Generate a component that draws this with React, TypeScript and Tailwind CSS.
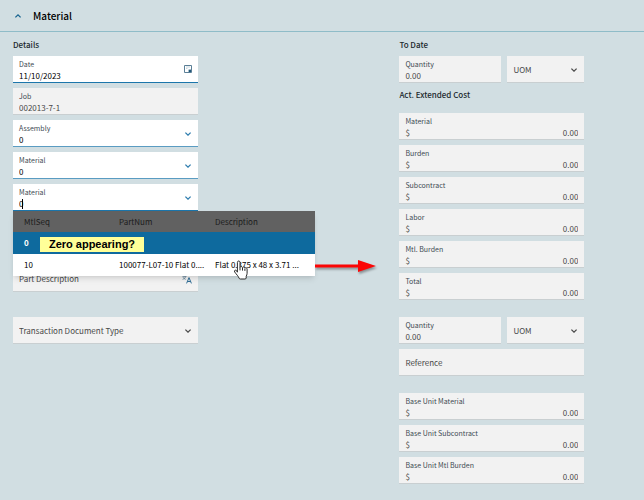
import React, { useState } from "react";
import clsx from "clsx";

interface FieldProps {
  id: string;
  label: string;
  value: string;
  active?: boolean;
  readOnly?: boolean;
  className?: string;
  children?: React.ReactNode;
}

interface SelectProps {
  id: string;
  label: string;
  value: string;
}

interface MaterialRow {
  seq: string;
  part: string;
  description: string;
}

const rows: MaterialRow[] = [
  { seq: "0", part: "", description: "" },
  {
    seq: "10",
    part: "100077-L07-10 Flat 0....",
    description: "Flat 0.375 x 48 x 3.71 ...",
  },
];

const actualCosts = [
  "Material",
  "Burden",
  "Subcontract",
  "Labor",
  "Mtl. Burden",
  "Total",
];

const baseUnits = [
  "Base Unit Material",
  "Base Unit Subcontract",
  "Base Unit Mtl Burden",
];

const Chevron = ({ className }: { className?: string }) => (
  <svg
    viewBox="0 0 8 6"
    fill="none"
    stroke="currentColor"
    strokeWidth="1.3"
    className={clsx("h-[6px] w-[8px]", className)}
  >
    <path d="M1.4 1.6 4 4.1 6.6 1.6" />
  </svg>
);

const CalendarIcon = () => (
  <svg viewBox="0 0 8 8" fill="none" className="h-[8px] w-[8px]">
    <path d="M.5.5h7v7h-7z" stroke="#5b7f96" />
    <path d="M2 2h4M2 3.500h1.500" stroke="#b9cbd6" strokeWidth=".8" />
    <path d="M4.600 4.600h2.400v2.400H4.600z" fill="#22587a" />
  </svg>
);

const TranslateIcon = () => (
  <svg viewBox="0 0 10 9" fill="none" className="h-[9px] w-[10px]">
    <path
      d="M.4 1.300h4M2.400.3v1M.6 4.400C2.400 3.600 3.500 2.600 3.900 1.300M1 2.200c.5 1 1.500 1.800 2.700 2.200"
      stroke="#5d7f95"
      strokeWidth=".8"
    />
    <path d="M4.600 8.400 7 2.600l2.400 5.800M5.400 6.500h3.200" stroke="#2f6d95" />
  </svg>
);

const HandCursor = () => (
  <svg viewBox="0 0 16 20" className="h-[20px] w-[16px]">
    <path
      d="M4.400 12.200V2.400c0-1.900 2.600-1.900 2.600 0v5c.3-1.200 2.300-1.100 2.500.2.5-1 2.300-.8 2.400.5.6-.8 2.200-.5 2.200 1v4.200c0 1.300-.5 2-.9 3V18c-.2.8-.6 1-1.300 1H7.300c-.7 0-1-.3-1.300-1-.7-1.900-2.500-3.400-4.300-6-.9-1.500.8-2.600 1.900-1.300z"
      fill="#fff"
      stroke="#2a2a2a"
      strokeLinejoin="round"
    />
    <path d="M7 7.400v3M9.500 8v2.600M11.900 8.600v2.300" stroke="#2a2a2a" />
  </svg>
);

const fieldLabel = "block text-[7px] leading-[12px] text-[#3d4a53]";

const heading = "text-[8px] leading-[13px] font-medium";

const Field = ({
  id,
  label,
  value,
  active,
  readOnly,
  className,
  children,
}: FieldProps) => (
  <div
    className={clsx(
      "relative h-[27px] border-b px-[6px] pt-[2px]",
      active ? "border-[#1c76ab] bg-white" : "border-[#c9cfd1] bg-[#f2f2f2]",
      className
    )}
  >
    <label htmlFor={id} className={fieldLabel}>
      {label}
    </label>

    <input
      id={id}
      defaultValue={value}
      readOnly={readOnly}
      className={clsx(
        "block h-[12px] w-full bg-transparent text-[8px] leading-[12px] outline-none",
        active ? "text-black" : "text-[#484848]"
      )}
    />

    {children}
  </div>
);

const MoneyField = ({ id, label }: { id: string; label: string }) => (
  <div className="h-[27px] border-b border-[#c9cfd1] bg-[#f2f2f2] px-[6px] pt-[2px]">
    <label htmlFor={id} className={fieldLabel}>
      {label}
    </label>

    <div className="flex text-[8px] leading-[12px] text-[#484848]">
      <span>$</span>
      <input
        id={id}
        defaultValue="0.00"
        readOnly
        className="h-[12px] min-w-0 flex-1 bg-transparent text-right outline-none"
      />
    </div>
  </div>
);

const SelectField = ({ id, label, value }: SelectProps) => (
  <div className="relative h-[27px] border-b border-[#5a9cc2] bg-white px-[6px] pt-[2px]">
    <label htmlFor={id} className={fieldLabel}>
      {label}
    </label>

    <select
      id={id}
      className="block h-[12px] w-full appearance-none bg-transparent text-[8px] leading-[12px] text-black outline-none"
    >
      <option>{value}</option>
    </select>

    <Chevron className="pointer-events-none absolute top-[11px] right-[6px] text-[#2b7bad]" />
  </div>
);

// Empty drop-down, its name stands in as the placeholder
const EmptySelect = ({ label, className }: { label: string; className?: string }) => (
  <div
    className={clsx(
      "relative h-[27px] border-b border-[#c9cfd1] bg-[#f2f2f2]",
      className
    )}
  >
    <select
      aria-label={label}
      className="block h-full w-full appearance-none bg-transparent px-[6px] pt-[2px] text-[8px] text-[#484848] outline-none"
    >
      <option>{label}</option>
    </select>

    <Chevron className="pointer-events-none absolute top-[11px] right-[6px] text-[#484848]" />
  </div>
);

const EmptyField = ({
  label,
  children,
}: {
  label: string;
  children?: React.ReactNode;
}) => (
  <div className="flex h-[27px] items-center border-b border-[#c9cfd1] bg-[#f2f2f2] px-[6px] pt-[2px]">
    <input
      aria-label={label}
      placeholder={label}
      className="min-w-0 flex-1 bg-transparent text-[8px] outline-none placeholder:text-[#484848]"
    />
    {children}
  </div>
);

const QuantityRow = ({ id }: { id: string }) => (
  <div className="flex gap-[6px]">
    <Field id={id} label="Quantity" value="0.00" readOnly className="w-[102px]" />
    <EmptySelect label="UOM" className="flex-1" />
  </div>
);

const MaterialList = () => {
  const [selected, setSelected] = useState(0);

  return (
    <div className="absolute top-full left-0 z-10 w-[302px] bg-white shadow-md">
      <table className="w-full table-fixed text-left text-[8px] leading-[12px]">
        <thead className="bg-[#616161] text-[#1c1c1c]">
          <tr className="h-[21px]">
            <th className="w-[95px] pl-[11px] font-normal">MtlSeq</th>
            <th className="w-[96px] pl-[11px] font-normal">PartNum</th>
            <th className="pl-[11px] font-normal">Description</th>
          </tr>
        </thead>

        <tbody>
          {rows.map((row, i) => (
            <tr
              key={row.seq}
              onClick={() => setSelected(i)}
              className={clsx(
                "h-[22px] whitespace-nowrap",
                selected === i ? "bg-[#0e6a9e] font-bold text-white" : "text-black"
              )}
            >
              <td className="pl-[11px]">{row.seq}</td>
              <td className="pl-[11px]">{row.part}</td>
              <td className="pl-[11px]">{row.description}</td>
            </tr>
          ))}
        </tbody>
      </table>

      <p className="absolute top-[26px] left-[27px] flex h-[15px] w-[104px] items-center justify-center bg-[#ffff99] font-['Liberation_Sans',sans-serif] text-[11px] font-bold whitespace-nowrap text-black">
        Zero appearing?
      </p>

      <div className="absolute top-[49px] left-[220px]">
        <HandCursor />
      </div>

      <svg
        viewBox="0 0 62 16"
        className="absolute top-[47px] left-full h-[16px] w-[62px] drop-shadow-[1px_2px_1px_rgba(0,0,0,0.35)]"
      >
        <path d="M0 6.500h43V2l18 6-18 6V9.500H0z" fill="#fb0505" />
      </svg>
    </div>
  );
};

const App = () => {
  const [open, setOpen] = useState(true);

  return (
    <main className="min-h-screen bg-[#d1dee2] font-['Noto_Sans_CJK_SC',sans-serif] text-[#20282d]">
      <header className="flex h-[32px] items-center border-b border-[#8fbcc8] px-[14px]">
        <button
          aria-label="Toggle Material"
          aria-expanded={open}
          onClick={() => setOpen(!open)}
        >
          <Chevron className="rotate-180 text-[#16638f]" />
        </button>
        <h1 className="ml-[11px] text-[10px] leading-[16px] font-medium text-black">
          Material
        </h1>
      </header>

      {open && (
        <div className="grid grid-cols-[3fr_2fr] pt-[6px] pb-[16px]">
          <section className="pl-[13px]">
            <div className="flex w-[185px] flex-col gap-[5px]">
              <h2 className={heading}>Details</h2>

              <Field id="date" label="Date" value="11/10/2023" active>
                <button
                  aria-label="Pick date"
                  className="absolute top-[9px] right-[6px]"
                >
                  <CalendarIcon />
                </button>
              </Field>

              <Field id="job" label="Job" value="002013-7-1" readOnly />
              <SelectField id="assembly" label="Assembly" value="0" />
              <SelectField id="material" label="Material" value="0" />

              <div className="relative">
                <Field id="mtlSeq" label="Material" value="0" active>
                  <Chevron className="pointer-events-none absolute top-[11px] right-[6px] text-[#2b7bad]" />
                  <span className="absolute bottom-[1px] left-[9px] h-[10px] w-px bg-black" />
                </Field>
                <MaterialList />
              </div>
            </div>

            <div className="mt-[54px] flex w-[185px] flex-col gap-[25px]">
              <EmptyField label="Part Description">
                <TranslateIcon />
              </EmptyField>
              <EmptySelect label="Transaction Document Type" />
            </div>
          </section>

          <section className="pl-[13px]">
            <div className="flex w-[185px] flex-col gap-[5px]">
              <h2 className={heading}>To Date</h2>
              <QuantityRow id="toDateQty" />
              <h2 className={heading}>Act. Extended Cost</h2>
            </div>

            <div className="mt-[12px] flex w-[185px] flex-col gap-[5px]">
              {actualCosts.map((label) => (
                <MoneyField key={label} id={`act-${label}`} label={label} />
              ))}
            </div>

            <div className="mt-[17px] flex w-[185px] flex-col gap-[5px]">
              <QuantityRow id="baseQty" />
              <EmptyField label="Reference" />
            </div>

            <div className="mt-[17px] flex w-[185px] flex-col gap-[5px]">
              {baseUnits.map((label) => (
                <MoneyField key={label} id={`base-${label}`} label={label} />
              ))}
            </div>
          </section>
        </div>
      )}
    </main>
  );
};

export default App;
